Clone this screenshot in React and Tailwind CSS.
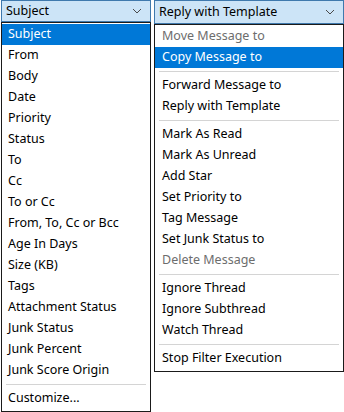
import React from 'react';

const leftItems = [
    'Subject', 'From', 'Body', 'Date', 'Priority', 'Status', 'To', 'Cc', 'To or Cc',
    'From, To, Cc or Bcc', 'Age In Days', 'Size (KB)', 'Tags', 'Attachment Status',
    'Junk Status', 'Junk Percent', 'Junk Score Origin', '-', 'Customize...',
];

// null = separator
const rightItems = [
    { label: 'Move Message to', disabled: true },
    { label: 'Copy Message to', selected: true },
    null,
    { label: 'Forward Message to' },
    { label: 'Reply with Template' },
    null,
    { label: 'Mark As Read' },
    { label: 'Mark As Unread' },
    { label: 'Add Star' },
    { label: 'Set Priority to' },
    { label: 'Tag Message' },
    { label: 'Set Junk Status to' },
    { label: 'Delete Message', disabled: true },
    null,
    { label: 'Ignore Thread' },
    { label: 'Ignore Subthread' },
    { label: 'Watch Thread' },
    null,
    { label: 'Stop Filter Execution' },
];

function Chevron() {
    return (
        <svg width="10" height="6" viewBox="0 0 10 6" className="shrink-0">
            <path d="M1 1 L5 5 L9 1" fill="none" stroke="#4a4a4a" strokeWidth="1" />
        </svg>
    );
}

function Header({ label }) {
    return (
        <div className="h-6 flex items-center justify-between pl-1 pr-2 bg-[#cce4f7] border border-[#3f79ad]">
            <span>{label}</span>
            <Chevron />
        </div>
    );
}

function Separator() {
    return <div className="mx-1 my-[3px] h-px bg-[#d4d4d4]" />;
}

function Row({ label, selected, disabled, indent }) {
    return (
        <div
            className={
                'h-[21px] flex items-center ' + indent + ' ' +
                (selected ? 'bg-[#0078d7] text-white' : disabled ? 'text-[#6d6d6d]' : 'text-black')
            }
        >
            {label}
        </div>
    );
}

export default function App() {
    return (
        <div
            className="w-[344px] h-[412px] bg-white flex gap-[3px] pl-px text-[12.5px] text-black overflow-hidden"
            style={{ fontFamily: '"Noto Sans", "Open Sans", sans-serif' }}
        >
            <div className="w-[150px] flex flex-col">
                <Header label="Subject" />
                <div className="border border-[#1a1a1a] pt-px pb-[2px]">
                    {leftItems.map((item, i) =>
                        item === '-' ? (
                            <Separator key={i} />
                        ) : (
                            <Row key={i} label={item} selected={i === 0} indent="pl-[6px]" />
                        )
                    )}
                </div>
            </div>
            <div className="w-[190px] flex flex-col">
                <Header label="Reply with Template" />
                <div className="border border-[#1a1a1a] pt-px pb-[2px]">
                    {rightItems.map((item, i) =>
                        item === null ? (
                            <Separator key={i} />
                        ) : (
                            <Row key={i} {...item} indent="pl-[7px]" />
                        )
                    )}
                </div>
            </div>
        </div>
    );
}
